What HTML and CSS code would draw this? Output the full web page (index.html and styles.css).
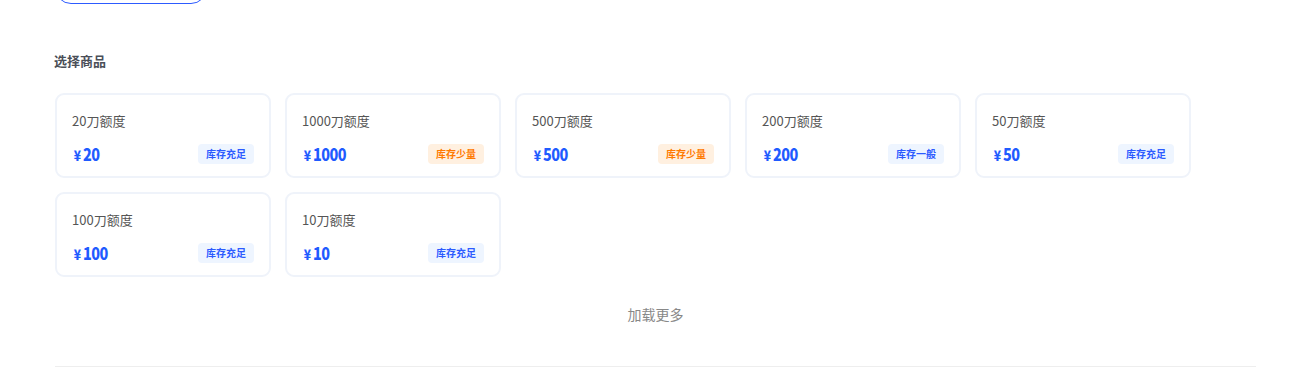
FILE: index.html
```html
<!DOCTYPE html>
<html lang="zh">
<head>
<meta charset="utf-8">
<link rel="stylesheet" href="styles.css">
</head>
<body>
<div class="page">
  <div class="top-btn"></div>
  <h3 class="section-title">选择商品</h3>
  <div class="grid">
    <div class="card"><div class="name">20刀额度</div><div class="row"><span class="price"><span class="yen">¥</span>20</span><span class="tag ok">库存充足</span></div></div>
    <div class="card"><div class="name">1000刀额度</div><div class="row"><span class="price"><span class="yen">¥</span>1000</span><span class="tag low">库存少量</span></div></div>
    <div class="card"><div class="name">500刀额度</div><div class="row"><span class="price"><span class="yen">¥</span>500</span><span class="tag low">库存少量</span></div></div>
    <div class="card"><div class="name">200刀额度</div><div class="row"><span class="price"><span class="yen">¥</span>200</span><span class="tag ok">库存一般</span></div></div>
    <div class="card"><div class="name">50刀额度</div><div class="row"><span class="price"><span class="yen">¥</span>50</span><span class="tag ok">库存充足</span></div></div>
    <div class="card"><div class="name">100刀额度</div><div class="row"><span class="price"><span class="yen">¥</span>100</span><span class="tag ok">库存充足</span></div></div>
    <div class="card"><div class="name">10刀额度</div><div class="row"><span class="price"><span class="yen">¥</span>10</span><span class="tag ok">库存充足</span></div></div>
  </div>
  <div class="more">加载更多</div>
  <div class="divider"></div>
</div>
</body>
</html>
```
FILE: styles.css
```css
html, body { margin: 0; padding: 0; background: #fff; }
body { font-family: "Noto Sans CJK SC", "Noto Sans", sans-serif; color: #333; }
.page { width: 1201px; margin-left: 55px; }
.top-btn {
  width: 152px; height: 32px; margin-top: -28px;
  border: 1px solid #2d5bff; border-radius: 17px;
  box-sizing: border-box;
}
.section-title {
  margin: 47px 0 0 -1px; font-size: 13px; line-height: 20px; font-weight: 700; color: #4a4f58;
}
.grid {
  margin-top: 22px;
  display: grid; grid-template-columns: repeat(5, 216px); column-gap: 14px; row-gap: 14px;
}
.card {
  box-sizing: border-box; height: 85px;
  border: 2px solid #eff3fa; border-radius: 9px;
  padding: 16px 15px 0 15px;
}
.name { font-size: 13px; line-height: 20px; color: #555; }
.row { display: flex; justify-content: space-between; align-items: center; margin-top: 13px; height: 20px; }
.price {
  font-family: "Noto Sans CJK SC", sans-serif; line-height: 20px;
  font-weight: 900; font-size: 17px; color: #1f5bff; padding-left: 2px; letter-spacing: -0.6px;
  display: inline-block; transform: scaleX(0.85); transform-origin: left center;
}
.yen { font-size: 14px; margin-right: 3px; }
.tag {
  font-size: 10px; line-height: 20px; font-weight: 700; padding: 0 8px; border-radius: 4px;
}
.tag.ok { background: #eef5ff; color: #2d5bff; }
.tag.low { background: #fff0e0; color: #ff7a00; }
.more { text-align: center; margin-top: 27px; font-size: 14px; line-height: 20px; color: #888; }
.divider { margin-top: 42px; height: 1px; background: #eeeeee; }
```
